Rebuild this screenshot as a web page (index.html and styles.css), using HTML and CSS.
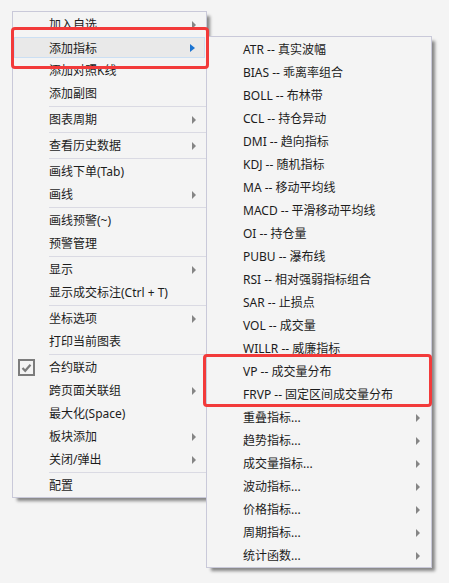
FILE: index.html
```html
<!DOCTYPE html>
<html>
<head>
    <meta name="viewport" content="width=device-width,initial-scale=1.0">
    <title>指标菜单</title>
    <link rel="stylesheet" href="styles.css">
</head>
<body>
    <div class="desk">
        <!-- main context menu -->
        <div class="menu main-menu">
            <div class="item sub">加入自选</div>
            <div class="item sub active">添加指标</div>
            <div class="item">添加对照K线</div>
            <div class="item">添加副图</div>
            <div class="sep"></div>
            <div class="item sub">图表周期</div>
            <div class="sep"></div>
            <div class="item sub">查看历史数据</div>
            <div class="sep"></div>
            <div class="item">画线下单(Tab)</div>
            <div class="item sub">画线</div>
            <div class="sep"></div>
            <div class="item">画线预警(~)</div>
            <div class="item">预警管理</div>
            <div class="sep"></div>
            <div class="item sub">显示</div>
            <div class="item">显示成交标注(Ctrl + T)</div>
            <div class="sep"></div>
            <div class="item sub">坐标选项</div>
            <div class="item">打印当前图表</div>
            <div class="sep"></div>
            <div class="item checked">
                <span class="check">
                    <svg width="11" height="10" viewBox="0 0 11 10"><polyline points="1.5,5 4.2,7.8 9.5,1.8" fill="none" stroke="#7c7c7c" stroke-width="2.2"/></svg>
                </span>
                合约联动
            </div>
            <div class="item sub">跨页面关联组</div>
            <div class="item">最大化(Space)</div>
            <div class="item sub">板块添加</div>
            <div class="item sub">关闭/弹出</div>
            <div class="sep"></div>
            <div class="item">配置</div>
        </div>

        <!-- indicator submenu -->
        <div class="menu sub-menu">
            <div class="item">ATR -- 真实波幅</div>
            <div class="item">BIAS -- 乖离率组合</div>
            <div class="item">BOLL -- 布林带</div>
            <div class="item">CCL -- 持仓异动</div>
            <div class="item">DMI -- 趋向指标</div>
            <div class="item">KDJ -- 随机指标</div>
            <div class="item">MA -- 移动平均线</div>
            <div class="item">MACD -- 平滑移动平均线</div>
            <div class="item">OI -- 持仓量</div>
            <div class="item">PUBU -- 瀑布线</div>
            <div class="item">RSI -- 相对强弱指标组合</div>
            <div class="item">SAR -- 止损点</div>
            <div class="item">VOL -- 成交量</div>
            <div class="item">WILLR -- 威廉指标</div>
            <div class="item">VP -- 成交量分布</div>
            <div class="item">FRVP -- 固定区间成交量分布</div>
            <div class="item sub">重叠指标...</div>
            <div class="item sub">趋势指标...</div>
            <div class="item sub">成交量指标...</div>
            <div class="item sub">波动指标...</div>
            <div class="item sub">价格指标...</div>
            <div class="item sub">周期指标...</div>
            <div class="item sub">统计函数...</div>
        </div>

        <!-- red annotation frames -->
        <div class="mark mark-one"></div>
        <div class="mark mark-two"></div>
    </div>
</body>
</html>
```

FILE: styles.css
```css
* {
    margin: 0;
    padding: 0;
    box-sizing: border-box;
}

body {
    background: #f4f4f4;
    font-family: "Noto Sans", "Noto Sans CJK SC", sans-serif;
    font-size: 12px;
    color: #1c1c1c;
}

.desk {
    position: relative;
    width: 449px;
    height: 583px;
    overflow: hidden;
}

.menu {
    position: absolute;
    background: #f4f4f4;
    border: 1px solid #c9c9d9;
    box-shadow: 4px 4px 3px -1px rgba(0, 0, 0, 0.45);
}

.main-menu {
    left: 12px;
    top: 11px;
    width: 195px;
    padding-top: 1px;
}

.sub-menu {
    left: 206px;
    top: 36px;
    width: 226px;
    padding-top: 1px;
}

.item {
    position: relative;
    height: 23px;
    line-height: 23px;
    padding-left: 36px;
    white-space: nowrap;
}

.sub::after {
    content: "";
    position: absolute;
    right: 10px;
    top: 8px;
    border-left: 4px solid #858585;
    border-top: 4px solid transparent;
    border-bottom: 4px solid transparent;
}

.sub-menu .sub::after {
    right: 11px;
}

.item.active {
    margin: 1px;
    height: 21px;
    line-height: 21px;
    padding-left: 34px;
    background: #e9e9e9;
    border: 1px solid #cbdff3;
}

.item.active::after {
    right: 9px;
    top: 6px;
    border-left-color: #1b74d2;
    border-left-width: 5px;
}

.sep {
    height: 1px;
    margin: 1px 0 1px 36px;
    background: #dadae3;
}

.check {
    position: absolute;
    left: 5px;
    top: 3px;
    width: 17px;
    height: 17px;
    border: 2px solid #7c7c7c;
    display: flex;
    align-items: center;
    justify-content: center;
}

.mark {
    position: absolute;
    border: 3px solid #f23a3a;
    border-radius: 4px;
}

.mark-one {
    left: 11px;
    top: 27px;
    width: 198px;
    height: 42px;
}

.mark-two {
    left: 203px;
    top: 354px;
    width: 229px;
    height: 53px;
}
```
